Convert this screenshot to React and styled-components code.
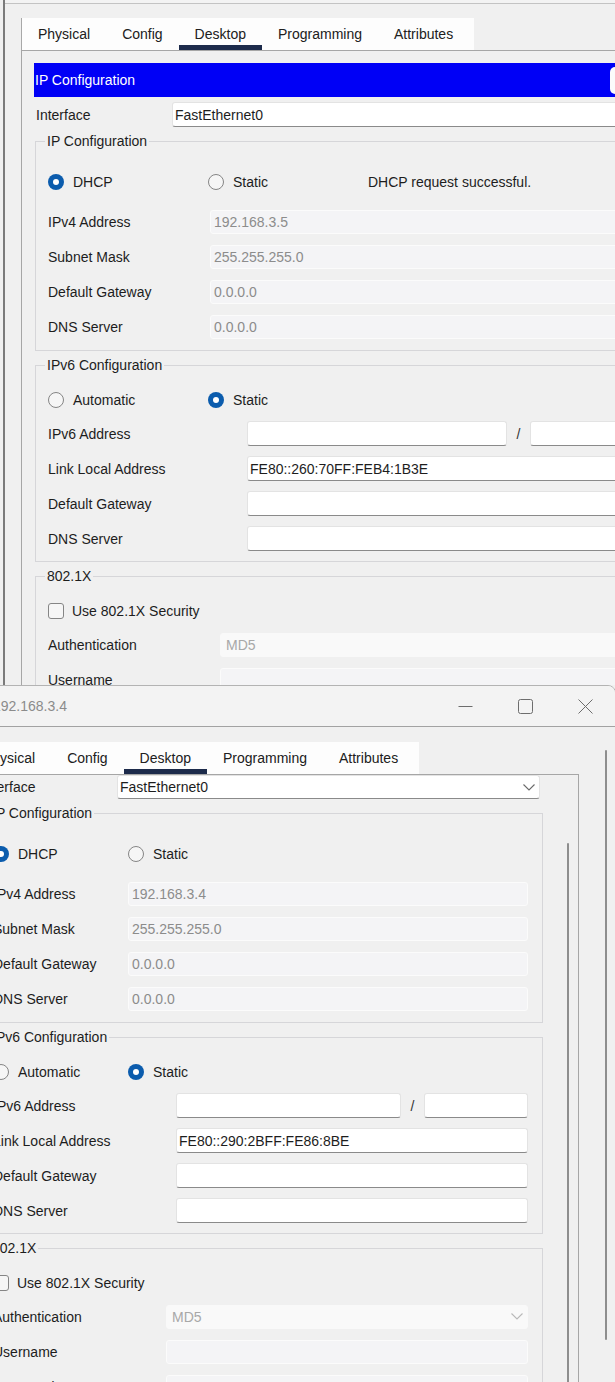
import React from 'react';
import styled, { createGlobalStyle, css } from 'styled-components';

const GlobalStyle = createGlobalStyle`
  *, *::before, *::after { box-sizing: border-box; }
  html, body { margin: 0; padding: 0; background: #f0f0f0; }
  body {
    font-family: "Liberation Sans", Arial, Helvetica, sans-serif;
    font-size: 14px;
    color: #1d1d1d;
    overflow: hidden;
  }
`;

const Desktop = styled.main`
  position: relative;
  width: 615px;
  height: 1382px;
  overflow: hidden;
  background: #f0f0f0;
`;

const Frame = styled.section`
  position: absolute;
  left: ${p => p.$left}px;
  top: ${p => p.$top}px;
  width: ${p => p.$width}px;
  height: ${p => p.$height}px;
  display: flex;
  flex-direction: column;
  overflow: hidden;
  background: #f0f0f0;
  ${p => p.$active ? css`
    border: 1px solid #b3b3b3;
    border-radius: 8px 8px 0 0;
  ` : css`
    border-left: 2px solid #7b7b7b;
  `}
`;

const TitleBar = styled.header`
  flex: none;
  height: 41px;
  display: flex;
  align-items: center;
  background: #f3f3f3;
  border-bottom: 1px solid ${p => (p.$active ? '#a2a2a2' : '#c3c3c3')};
`;

const TitleText = styled.span`
  flex: 1;
  padding-left: ${p => p.$indent}px;
  font-size: 14px;
  color: #8b8b8b;
  white-space: nowrap;
`;

const Controls = styled.div`
  display: flex;
  height: 100%;
`;

const ControlButton = styled.span`
  width: 60px;
  display: flex;
  align-items: center;
  justify-content: center;
  color: #6d6d6d;
`;

const Body = styled.div`
  flex: 1;
  min-height: 0;
  display: flex;
  padding-left: ${p => p.$padLeft}px;
`;

const TabWidget = styled.div`
  flex: none;
  display: flex;
  flex-direction: column;
  padding-top: ${p => p.$padTop}px;
`;

const TabBar = styled.nav`
  flex: none;
  display: flex;
  width: 453px;
  height: 32px;
  background: #fdfdfd;
  border-left: 1px solid #a8a8a8;
`;

const Tab = styled.span`
  display: flex;
  align-items: center;
  padding: 0 16px;
  font-size: 14px;
  color: #202020;
  white-space: nowrap;
  box-shadow: ${p => (p.$selected ? 'inset 0 -5px 0 #1d2b4b' : 'none')};
`;

const Panel = styled.div`
  flex: 1;
  display: flex;
  border: 1px solid #a6a6a6;
  border-bottom: none;
  padding: ${p => p.$padTop}px 0 0 13px;
  background: #f0f0f0;
`;

const Main = styled.div`
  flex: none;
  width: ${p => p.$w}px;
  display: flex;
  flex-direction: column;
`;

const ScrollColumn = styled.div`
  flex: ${p => (p.$fixed ? 'none' : '1')};
  width: ${p => (p.$fixed ? `${p.$fixed}px` : 'auto')};
  display: flex;
  flex-direction: column;
`;

const Thumb = styled.div`
  width: 2px;
  height: ${p => p.$h}px;
  margin: ${p => p.$y}px 0 0 ${p => p.$x}px;
  background: #8e8e8e;
  border-radius: 1px;
`;

const Banner = styled.div`
  flex: none;
  height: 34px;
  margin: 0 0 5px -1px;
  padding-left: 1px;
  display: flex;
  align-items: center;
  justify-content: space-between;
  background: #0000f6;
  color: #ffffff;
  font-size: 14px;
`;

const BannerClose = styled.span`
  width: 30px;
  height: 27px;
  margin-right: 9px;
  border-radius: 5px;
  background: #fbfbfb;
`;

const InterfaceRow = styled.div`
  flex: none;
  display: grid;
  grid-template-columns: 136px 1fr;
  align-items: center;
  height: ${p => p.$h}px;
  padding: 0 3px 0 1px;
`;

const Label = styled.span`
  font-size: 14px;
  color: #1d1d1d;
  white-space: nowrap;
`;

const Group = styled.fieldset`
  margin: 6px 0 0;
  padding: 11px 14px ${p => p.$padBottom}px 12px;
  border: 1px solid #d6d6d9;
  min-width: 0;
`;

const Legend = styled.legend`
  margin-left: -3px;
  padding: 0 2px;
  font-size: 14px;
  line-height: 16px;
  color: #1d1d1d;
  white-space: nowrap;
`;

const ChoiceRow = styled.div`
  display: grid;
  grid-template-columns: ${p => p.$col}px ${p => p.$col}px 1fr;
  align-items: center;
  height: ${p => p.$h}px;
`;

const Choice = styled.span`
  display: flex;
  align-items: center;
  gap: ${p => p.$gap ?? 9}px;
  font-size: 14px;
  white-space: nowrap;
`;

const Radio = styled.span`
  flex: none;
  width: 16px;
  height: 16px;
  border-radius: 50%;
  display: flex;
  align-items: center;
  justify-content: center;
  ${p => p.$on ? css`
    background: #0b5cad;
    &::after {
      content: '';
      width: 6px;
      height: 6px;
      border-radius: 50%;
      background: #ffffff;
    }
  ` : css`
    background: #f6f6f6;
    border: 1px solid #858585;
  `}
`;

const Box = styled.span`
  flex: none;
  width: 16px;
  height: 16px;
  border-radius: 3px;
  background: #f6f6f6;
  border: 1px solid #858585;
`;

const Status = styled.span`
  font-size: 14px;
  color: #1d1d1d;
  white-space: nowrap;
`;

const FieldRow = styled.div`
  display: grid;
  grid-template-columns: ${p => p.$cols};
  align-items: center;
  height: 35px;
`;

const fieldLooks = {
  edit: css`
    background: #ffffff;
    border: 1px solid #e3e3e3;
    border-bottom-color: #8a8a8a;
    color: #1d1d1d;
    padding-left: 2px;
  `,
  locked: css`
    background: #f4f4f6;
    border: 1px solid #fbfbfb;
    color: #8c8c8c;
    padding-left: 3px;
  `,
  muted: css`
    background: #f9f9f9;
    border: 1px solid #f9f9f9;
    color: #a8a8a8;
    padding-left: 5px;
  `,
};

const Field = styled.div`
  height: ${p => p.$h ?? 24}px;
  min-width: 0;
  display: flex;
  align-items: center;
  justify-content: space-between;
  padding-right: 4px;
  border-radius: 3px;
  font-size: 14px;
  white-space: nowrap;
  overflow: hidden;
  ${p => fieldLooks[p.$variant]}
`;

const Slash = styled.span`
  text-align: center;
  font-size: 14px;
  color: #333333;
`;

const Chevron = ({ color }) => (
  <svg width="12" height="7" viewBox="0 0 12 7" aria-hidden="true">
    <polyline points="0.5,0.5 6,6 11.5,0.5" fill="none" stroke={color} strokeWidth="1.1" />
  </svg>
);

const MinimizeIcon = () => (
  <svg width="15" height="15" viewBox="0 0 15 15" aria-hidden="true">
    <line x1="0.5" y1="7.5" x2="14.5" y2="7.5" stroke="currentColor" strokeWidth="1" />
  </svg>
);

const MaximizeIcon = () => (
  <svg width="15" height="15" viewBox="0 0 15 15" aria-hidden="true">
    <rect x="0.5" y="0.5" width="14" height="14" rx="2" fill="none" stroke="currentColor" strokeWidth="1" />
  </svg>
);

const CloseIcon = () => (
  <svg width="15" height="15" viewBox="0 0 15 15" aria-hidden="true">
    <path d="M0.5 0.5 L14.5 14.5 M14.5 0.5 L0.5 14.5" fill="none" stroke="currentColor" strokeWidth="1" />
  </svg>
);

const TABS = ['Physical', 'Config', 'Desktop', 'Programming', 'Attributes'];

function PTWindow({ cfg }) {
  const ipRows = [
    ['IPv4 Address', cfg.ipv4],
    ['Subnet Mask', '255.255.255.0'],
    ['Default Gateway', '0.0.0.0'],
    ['DNS Server', '0.0.0.0'],
  ];
  return (
    <Frame $left={cfg.left} $top={cfg.top} $width={cfg.width} $height={cfg.height} $active={cfg.active}>
      <TitleBar $active={cfg.active}>
        <TitleText $indent={cfg.titleIndent}>{cfg.title}</TitleText>
        <Controls>
          <ControlButton><MinimizeIcon /></ControlButton>
          <ControlButton><MaximizeIcon /></ControlButton>
          <ControlButton><CloseIcon /></ControlButton>
        </Controls>
      </TitleBar>
      <Body $padLeft={cfg.padLeft}>
        <TabWidget $padTop={cfg.padTop}>
          <TabBar>
            {TABS.map(t => (
              <Tab key={t} $selected={t === 'Desktop'}>{t}</Tab>
            ))}
          </TabBar>
          <Panel $padTop={cfg.panelPadTop}>
            <Main $w={cfg.mainW}>
              {cfg.banner && (
                <Banner>
                  IP Configuration
                  <BannerClose />
                </Banner>
              )}
              <InterfaceRow $h={cfg.ifaceH}>
                <Label>Interface</Label>
                <Field $variant="edit" $h={cfg.ifaceH}>
                  FastEthernet0
                  <Chevron color="#6b6b6b" />
                </Field>
              </InterfaceRow>

              <Group $padBottom={6}>
                <Legend>IP Configuration</Legend>
                <ChoiceRow $col={cfg.radioCol} $h={44}>
                  <Choice><Radio $on />DHCP</Choice>
                  <Choice><Radio />Static</Choice>
                  <Status>{cfg.status}</Status>
                </ChoiceRow>
                {ipRows.map(([label, value]) => (
                  <FieldRow key={label} $cols={`${cfg.ipCol}px 1fr`}>
                    <Label>{label}</Label>
                    <Field $variant="locked">{value}</Field>
                  </FieldRow>
                ))}
              </Group>

              <Group $padBottom={5}>
                <Legend>IPv6 Configuration</Legend>
                <ChoiceRow $col={cfg.radioCol} $h={32}>
                  <Choice><Radio />Automatic</Choice>
                  <Choice><Radio $on />Static</Choice>
                </ChoiceRow>
                <FieldRow $cols={`${cfg.v6Col}px 1fr 23px 104px`}>
                  <Label>IPv6 Address</Label>
                  <Field $variant="edit" $h={25} />
                  <Slash>/</Slash>
                  <Field $variant="edit" $h={25} />
                </FieldRow>
                <FieldRow $cols={`${cfg.v6Col}px 1fr`}>
                  <Label>Link Local Address</Label>
                  <Field $variant="edit" $h={25}>{cfg.linkLocal}</Field>
                </FieldRow>
                <FieldRow $cols={`${cfg.v6Col}px 1fr`}>
                  <Label>Default Gateway</Label>
                  <Field $variant="edit" $h={25} />
                </FieldRow>
                <FieldRow $cols={`${cfg.v6Col}px 1fr`}>
                  <Label>DNS Server</Label>
                  <Field $variant="edit" $h={25} />
                </FieldRow>
              </Group>

              <Group $padBottom={6}>
                <Legend>802.1X</Legend>
                <ChoiceRow $col={cfg.radioCol} $h={32}>
                  <Choice $gap={8}><Box />Use 802.1X Security</Choice>
                </ChoiceRow>
                <FieldRow $cols={`${cfg.secCol}px 1fr`}>
                  <Label>Authentication</Label>
                  <Field $variant="muted">
                    MD5
                    <Chevron color="#b9b9b9" />
                  </Field>
                </FieldRow>
                <FieldRow $cols={`${cfg.secCol}px 1fr`}>
                  <Label>Username</Label>
                  <Field $variant="locked" />
                </FieldRow>
                {cfg.showPassword && (
                  <FieldRow $cols={`${cfg.secCol}px 1fr`}>
                    <Label>Password</Label>
                    <Field $variant="locked" />
                  </FieldRow>
                )}
              </Group>
            </Main>
            <ScrollColumn $fixed={35}>
              {cfg.innerThumb && <Thumb $x={24} $y={cfg.innerThumb.y} $h={cfg.innerThumb.h} />}
            </ScrollColumn>
          </Panel>
        </TabWidget>
        <ScrollColumn>
          {cfg.outerThumb && <Thumb $x={26} $y={cfg.outerThumb.y} $h={cfg.outerThumb.h} />}
        </ScrollColumn>
      </Body>
    </Frame>
  );
}

const WINDOWS = [
  {
    key: 'pc-back',
    title: '',
    titleIndent: 52,
    left: 3,
    top: -37,
    width: 780,
    height: 722,
    active: false,
    padTop: 14,
    padLeft: 16,
    panelPadTop: 12,
    banner: true,
    mainW: 614,
    ifaceH: 25,
    ipCol: 162,
    radioCol: 160,
    v6Col: 199,
    secCol: 172,
    ipv4: '192.168.3.5',
    linkLocal: 'FE80::260:70FF:FEB4:1B3E',
    status: 'DHCP request successful.',
    showPassword: false,
    innerThumb: null,
    outerThumb: null,
  },
  {
    key: 'pc-front',
    title: '192.168.3.4',
    titleIndent: 52,
    left: -60,
    top: 685,
    width: 676,
    height: 740,
    active: true,
    padTop: 15,
    padLeft: 25,
    panelPadTop: 0,
    banner: false,
    mainW: 563,
    ifaceH: 24,
    ipCol: 135,
    radioCol: 135,
    v6Col: 183,
    secCol: 173,
    ipv4: '192.168.3.4',
    linkLocal: 'FE80::290:2BFF:FE86:8BE',
    status: '',
    showPassword: true,
    innerThumb: { y: 68, h: 700 },
    outerThumb: { y: 23, h: 590 },
  },
];

export default function App() {
  return (
    <>
      <GlobalStyle />
      <Desktop>
        {WINDOWS.map(cfg => (
          <PTWindow key={cfg.key} cfg={cfg} />
        ))}
      </Desktop>
    </>
  );
}
